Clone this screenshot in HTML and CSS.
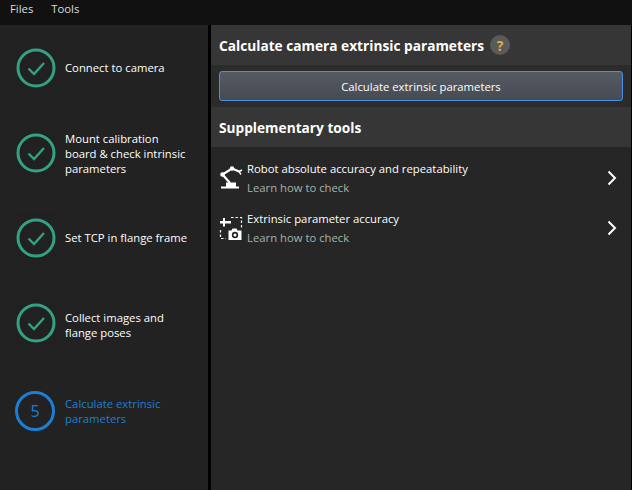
FILE: index.html
```html
<!DOCTYPE html>
<html lang="en">
<head>
    <meta charset="UTF-8">
    <title>Calculate camera extrinsic parameters</title>
    <link rel="stylesheet" href="styles.css">
</head>
<body>
    <div class="menu-bar">
        <span class="menu-item">Files</span>
        <span class="menu-item">Tools</span>
    </div>
    <div class="main">
        <div class="sidebar">
            <div class="step">
                <div class="step-icon">
                    <svg width="40" height="40" viewBox="0 0 40 40"><circle cx="20" cy="20" r="18" fill="none" stroke="#33a183" stroke-width="3"/><path d="M12.5 20.5l5.5 5.5 10-11" fill="none" stroke="#33a183" stroke-width="2.4"/></svg>
                </div>
                <div class="step-label">Connect to camera</div>
            </div>
            <div class="step">
                <div class="step-icon">
                    <svg width="40" height="40" viewBox="0 0 40 40"><circle cx="20" cy="20" r="18" fill="none" stroke="#33a183" stroke-width="3"/><path d="M12.5 20.5l5.5 5.5 10-11" fill="none" stroke="#33a183" stroke-width="2.4"/></svg>
                </div>
                <div class="step-label">Mount calibration board &amp; check intrinsic parameters</div>
            </div>
            <div class="step">
                <div class="step-icon">
                    <svg width="40" height="40" viewBox="0 0 40 40"><circle cx="20" cy="20" r="18" fill="none" stroke="#33a183" stroke-width="3"/><path d="M12.5 20.5l5.5 5.5 10-11" fill="none" stroke="#33a183" stroke-width="2.4"/></svg>
                </div>
                <div class="step-label">Set TCP in flange frame</div>
            </div>
            <div class="step">
                <div class="step-icon">
                    <svg width="40" height="40" viewBox="0 0 40 40"><circle cx="20" cy="20" r="18" fill="none" stroke="#33a183" stroke-width="3"/><path d="M12.5 20.5l5.5 5.5 10-11" fill="none" stroke="#33a183" stroke-width="2.4"/></svg>
                </div>
                <div class="step-label">Collect images and flange poses</div>
            </div>
            <div class="step step-active">
                <div class="step-number">5</div>
                <div class="step-label">Calculate extrinsic parameters</div>
            </div>
        </div>
        <div class="content">
            <div class="section-head">
                <span class="section-title">Calculate camera extrinsic parameters</span>
                <span class="help">?</span>
            </div>
            <div class="action-row">
                <button class="action-btn">Calculate extrinsic parameters</button>
            </div>
            <div class="section-head">
                <span class="section-title">Supplementary tools</span>
            </div>
            <div class="tools">
                <div class="tool">
                    <svg class="tool-icon" width="26" height="26" viewBox="0 0 26 26">
                        <path d="M2 21.500h18v2H2zM7 17.500h10v4H7z" fill="#fff"/>
                        <path d="M11 18L3.500 9.500 13 3.500l7 3" fill="none" stroke="#fff" stroke-width="2.200"/>
                        <circle cx="3.500" cy="9.500" r="2.300" fill="#fff"/>
                        <circle cx="13" cy="3.500" r="2.200" fill="#fff"/>
                        <path d="M20 6.500l3-1.500M20 6.500l2 3" fill="none" stroke="#fff" stroke-width="1.400"/>
                    </svg>
                    <div class="tool-text">
                        <div class="tool-name">Robot absolute accuracy and repeatability</div>
                        <div class="tool-link">Learn how to check</div>
                    </div>
                    <svg class="chevron" width="10" height="16" viewBox="0 0 10 16"><path d="M1.500 1.500L8 8l-6.500 6.500" fill="none" stroke="#fff" stroke-width="2"/></svg>
                </div>
                <div class="tool">
                    <svg class="tool-icon" width="26" height="26" viewBox="0 0 26 26">
                        <path d="M12 2.500h10.500V13M1.500 15v8.500H7" fill="none" stroke="#fff" stroke-width="1.200" stroke-dasharray="2.500 2"/>
                        <path d="M1 6h3V3h2v3h6v2.500H6v3H4v-3H1z" fill="#fff"/>
                        <path d="M9.500 15.500h3l1-2h4l1 2h4V25h-13z" fill="#fff"/>
                        <circle cx="16" cy="20" r="3.200" fill="#262626"/>
                        <circle cx="16" cy="20" r="1.500" fill="#fff"/>
                    </svg>
                    <div class="tool-text">
                        <div class="tool-name">Extrinsic parameter accuracy</div>
                        <div class="tool-link">Learn how to check</div>
                    </div>
                    <svg class="chevron" width="10" height="16" viewBox="0 0 10 16"><path d="M1.500 1.500L8 8l-6.500 6.500" fill="none" stroke="#fff" stroke-width="2"/></svg>
                </div>
            </div>
        </div>
    </div>
</body>
</html>
```

FILE: styles.css
```css
html, body {
    height: 100%;
}

body {
    margin: 0;
    background-color: #000;
    color: #fff;
    font-family: "Open Sans", "Noto Sans", sans-serif;
    font-size: 11.3px;
    display: flex;
    flex-direction: column;
    overflow: hidden;
}

.menu-bar {
    height: 25px;
    box-sizing: border-box;
    padding: 0 0 8px 10px;
    background-color: #111;
    color: #ddd;
    display: flex;
    align-items: center;
    gap: 18px;
}

.main {
    flex: 1;
    display: flex;
    gap: 3px;
    min-height: 0;
}

.sidebar {
    width: 208px;
    background-color: #222;
    display: flex;
    flex-direction: column;
}

.step {
    height: 85px;
    display: flex;
    align-items: center;
    padding-left: 16px;
    box-sizing: border-box;
}

.step-icon {
    width: 40px;
    height: 40px;
    margin-right: 9px;
    background-color: #212121;
    box-shadow: 0 0 0 6px #212121;
}

.step-label {
    line-height: 15px;
    width: 128px;
}

.step:nth-child(2) .step-label {
    margin-top: 2px;
}

.step:nth-child(4) .step-label {
    margin-top: 4px;
}

.step-active {
    margin-top: 3px;
    padding-left: 15px;
    color: #1b7fd6;
}

.step-active .step-label {
    margin-left: 10px;
}

.step-number {
    width: 40px;
    height: 40px;
    box-sizing: border-box;
    border: 3px solid #1b7fd6;
    border-radius: 50%;
    font-size: 16px;
    display: flex;
    align-items: center;
    justify-content: center;
}

.content {
    flex: 1;
    margin-right: 1px;
    background-color: #262626;
}

.section-head {
    height: 40px;
    padding-left: 8px;
    background-color: #363636;
    display: flex;
    align-items: center;
    gap: 6px;
}

.section-title {
    font-size: 13.7px;
    font-weight: 700;
}

.help {
    width: 20px;
    height: 20px;
    border-radius: 50%;
    background-color: #5a5a5a;
    color: #e0b040;
    font-size: 14px;
    font-weight: 700;
    display: flex;
    align-items: center;
    justify-content: center;
}

.action-row {
    height: 42px;
    padding: 6px 8px;
    box-sizing: border-box;
    background-color: #2b2b2b;
}

.action-btn {
    width: 100%;
    height: 30px;
    border: 1px solid #4a90e2;
    border-radius: 3px;
    background: linear-gradient(#565b63, #464b53);
    color: #fff;
    font-family: inherit;
    font-size: 11.3px;
}

.tools {
    padding-top: 6px;
}

.tool {
    height: 50px;
    padding: 0 14px 0 8px;
    display: flex;
    align-items: center;
}

.tool-icon {
    margin-right: 2px;
    flex: none;
}

.tool-text {
    flex: 1;
}

.tool-name {
    line-height: 19px;
}

.tool-link {
    color: #a4b4a8;
    line-height: 19px;
}
```
